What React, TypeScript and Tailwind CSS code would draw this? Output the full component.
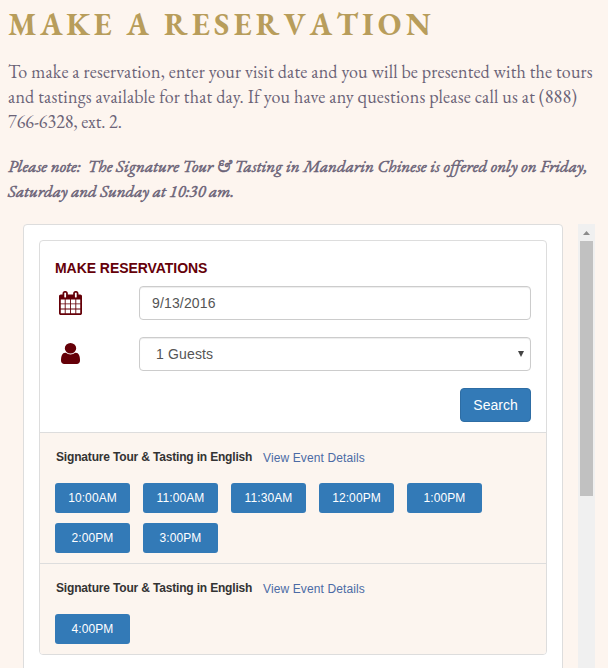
import type { ReactNode } from "react";

const serif = "font-['EB_Garamond','Liberation_Serif',serif]";

function CalendarIcon() {
  return (
    <svg className="h-6 w-[23px]" viewBox="0 0 1664 1792" preserveAspectRatio="none" fill="currentColor" fillRule="evenodd">
      <path d="M128 1664h288v-288h-288v288zM480 1664h320v-288h-320v288zM128 1312h288v-320h-288v320zM480 1312h320v-320h-320v320zM128 928h288v-288h-288v288zM864 1664h320v-288h-320v288zM480 928h320v-288h-320v288zM1248 1664h288v-288h-288v288zM864 1312h320v-320h-320v320zM512 448v-288q0-13-9.5-22.5t-22.5-9.5h-64q-13 0-22.5 9.5t-9.5 22.5v288q0 13 9.5 22.5t22.5 9.5h64q13 0 22.5-9.5t9.5-22.5zM1248 1312h288v-320h-288v320zM864 928h320v-288h-320v288zM1248 928h288v-288h-288v288zM1280 448v-288q0-13-9.5-22.5t-22.5-9.5h-64q-13 0-22.5 9.5t-9.5 22.5v288q0 13 9.5 22.5t22.5 9.5h64q13 0 22.5-9.5t9.5-22.5zM1664 384v1280q0 52-38 90t-90 38h-1408q-52 0-90-38t-38-90v-1280q0-52 38-90t90-38h128v-96q0-66 47-113t113-47h64q66 0 113 47t47 113v96h384v-96q0-66 47-113t113-47h64q66 0 113 47t47 113v96h128q52 0 90 38t38 90z" />
    </svg>
  );
}

function UserIcon() {
  return (
    <svg className="mb-px ml-0.5 h-[21px] w-[19px]" viewBox="0 128 1280 1536" preserveAspectRatio="none" fill="currentColor">
      <path d="M1280 1399q0 109-62.5 187t-150.5 78h-854q-88 0-150.5-78t-62.5-187q0-85 8.5-160.5t31.5-152 58.5-131 94-89 134.5-34.5q131 128 313 128t313-128q76 0 134.5 34.5t94 89 58.5 131 31.5 152 8.5 160.5zM1024 512q0 159-112.5 271.5t-271.5 112.5-271.5-112.5-112.5-271.5 112.5-271.5 271.5-112.5 271.5 112.5 112.5 271.5z" />
    </svg>
  );
}

function Field({ icon, children }: { icon: ReactNode; children: ReactNode }) {
  return (
    <div className="flex h-[34px] items-center text-[#650008]">
      <div className="w-[84px] shrink-0 pl-1">{icon}</div>
      <div className="flex h-[34px] flex-1 items-center justify-between rounded border border-[#ccc] bg-white pr-1.5 pl-3 text-sm tracking-[0.15px] text-[#555] shadow-[inset_0_1px_1px_rgba(0,0,0,0.075)]">
        {children}
      </div>
    </div>
  );
}

function Tour({ times, className }: { times: string[]; className: string }) {
  return (
    <section className={`border-t border-[#ddd] bg-[#fcf5ef] px-[15px] ${className}`}>
      <div className="flex h-[50px] items-center pb-0.5 pl-px text-xs whitespace-nowrap">
        <h3 className="w-[207px] font-bold tracking-[-0.17px] text-[#333]">Signature Tour &amp; Tasting in English</h3>
        <a className="pt-0.5 tracking-[0.12px] text-[#4b6ba5]">View Event Details</a>
      </div>
      <div className="flex flex-wrap gap-x-[13px] gap-y-2.5">
        {times.map((time) => (
          <button key={time} className="h-[30px] w-[75px] rounded-[3px] bg-[#337ab7] text-xs tracking-[0.1px] text-white">
            {time}
          </button>
        ))}
      </div>
    </section>
  );
}

export default function App() {
  return (
    <div className="h-[668px] w-[608px] overflow-hidden bg-[#fdf5ef] font-['Liberation_Sans',Arial,sans-serif]">
      <header className={`h-[224px] pl-2 whitespace-nowrap text-[#6b6377] ${serif}`}>
        <h1 className="h-[59px] pt-1 text-[31px] leading-10 font-bold tracking-[4.3px] text-[#b89d5b] [font-kerning:none]">
          <span className="tracking-[3.8px]">MAKE </span>
          <span className="tracking-[3.9px]">A </span>
          RESERVATION
        </h1>
        <p className="text-lg leading-[25px]">
          <span className="block tracking-[0.18px]">To make a reservation, enter your visit date and you will be presented with the tours</span>
          <span className="block tracking-[0.21px]">and tastings available for that day. If you have any questions please call us at (888)</span>
          <span className="block">766-6328, ext. 2.</span>
        </p>
        <p className="mt-5 text-[17px] leading-[25px] italic [-webkit-text-stroke:0.5px_#6b6377]">
          <span className="block [word-spacing:0.2px]">Please note:&nbsp; The Signature Tour &amp; Tasting in Mandarin Chinese is offered only on Friday,</span>
          <span className="block">Saturday and Sunday at 10:30 am.</span>
        </p>
      </header>
      <main className="flex h-[444px] pl-[23px]">
        <div className="h-[460px] w-[540px] shrink-0 rounded-t-[4px] border border-[#ddd] bg-white p-[15px]">
          <div className="h-[415px] overflow-hidden rounded border border-[#ddd]">
            <form className="h-[191px] px-[15px] pt-[18px]">
              <h2 className="mb-[9px] h-[18px] text-sm leading-[18px] font-bold tracking-[-0.05px] text-[#650008]">MAKE RESERVATIONS</h2>
              <Field icon={<CalendarIcon />}>9/13/2016</Field>
              <div className="h-[17px]" />
              <Field icon={<UserIcon />}>
                <span className="pl-1">1 Guests</span>
                <svg className="h-1.5 w-1.5" viewBox="0 0 6 6" fill="#444"><path d="M0 0h6L3 6z" /></svg>
              </Field>
              <div className="mt-[17px] flex justify-end">
                <button type="button" className="h-[34px] w-[71px] rounded border border-[#2e6da4] bg-[#337ab7] text-sm text-white">Search</button>
              </div>
            </form>
            <Tour className="h-[131px]" times={["10:00AM", "11:00AM", "11:30AM", "12:00PM", "1:00PM", "2:00PM", "3:00PM"]} />
            <Tour className="h-[91px]" times={["4:00PM"]} />
          </div>
        </div>
        <div className="ml-[15px] flex w-[17px] flex-col items-center bg-[#f0f0f0]">
          <div className="flex h-[17px] items-center">
            <svg className="h-1 w-[7px]" viewBox="0 0 7 4" fill="#8b8b8b"><path d="M0 4h7L3.5 0z" /></svg>
          </div>
          <div className="h-[255px] w-[13px] bg-[#c1c1c1]" />
        </div>
      </main>
    </div>
  );
}
